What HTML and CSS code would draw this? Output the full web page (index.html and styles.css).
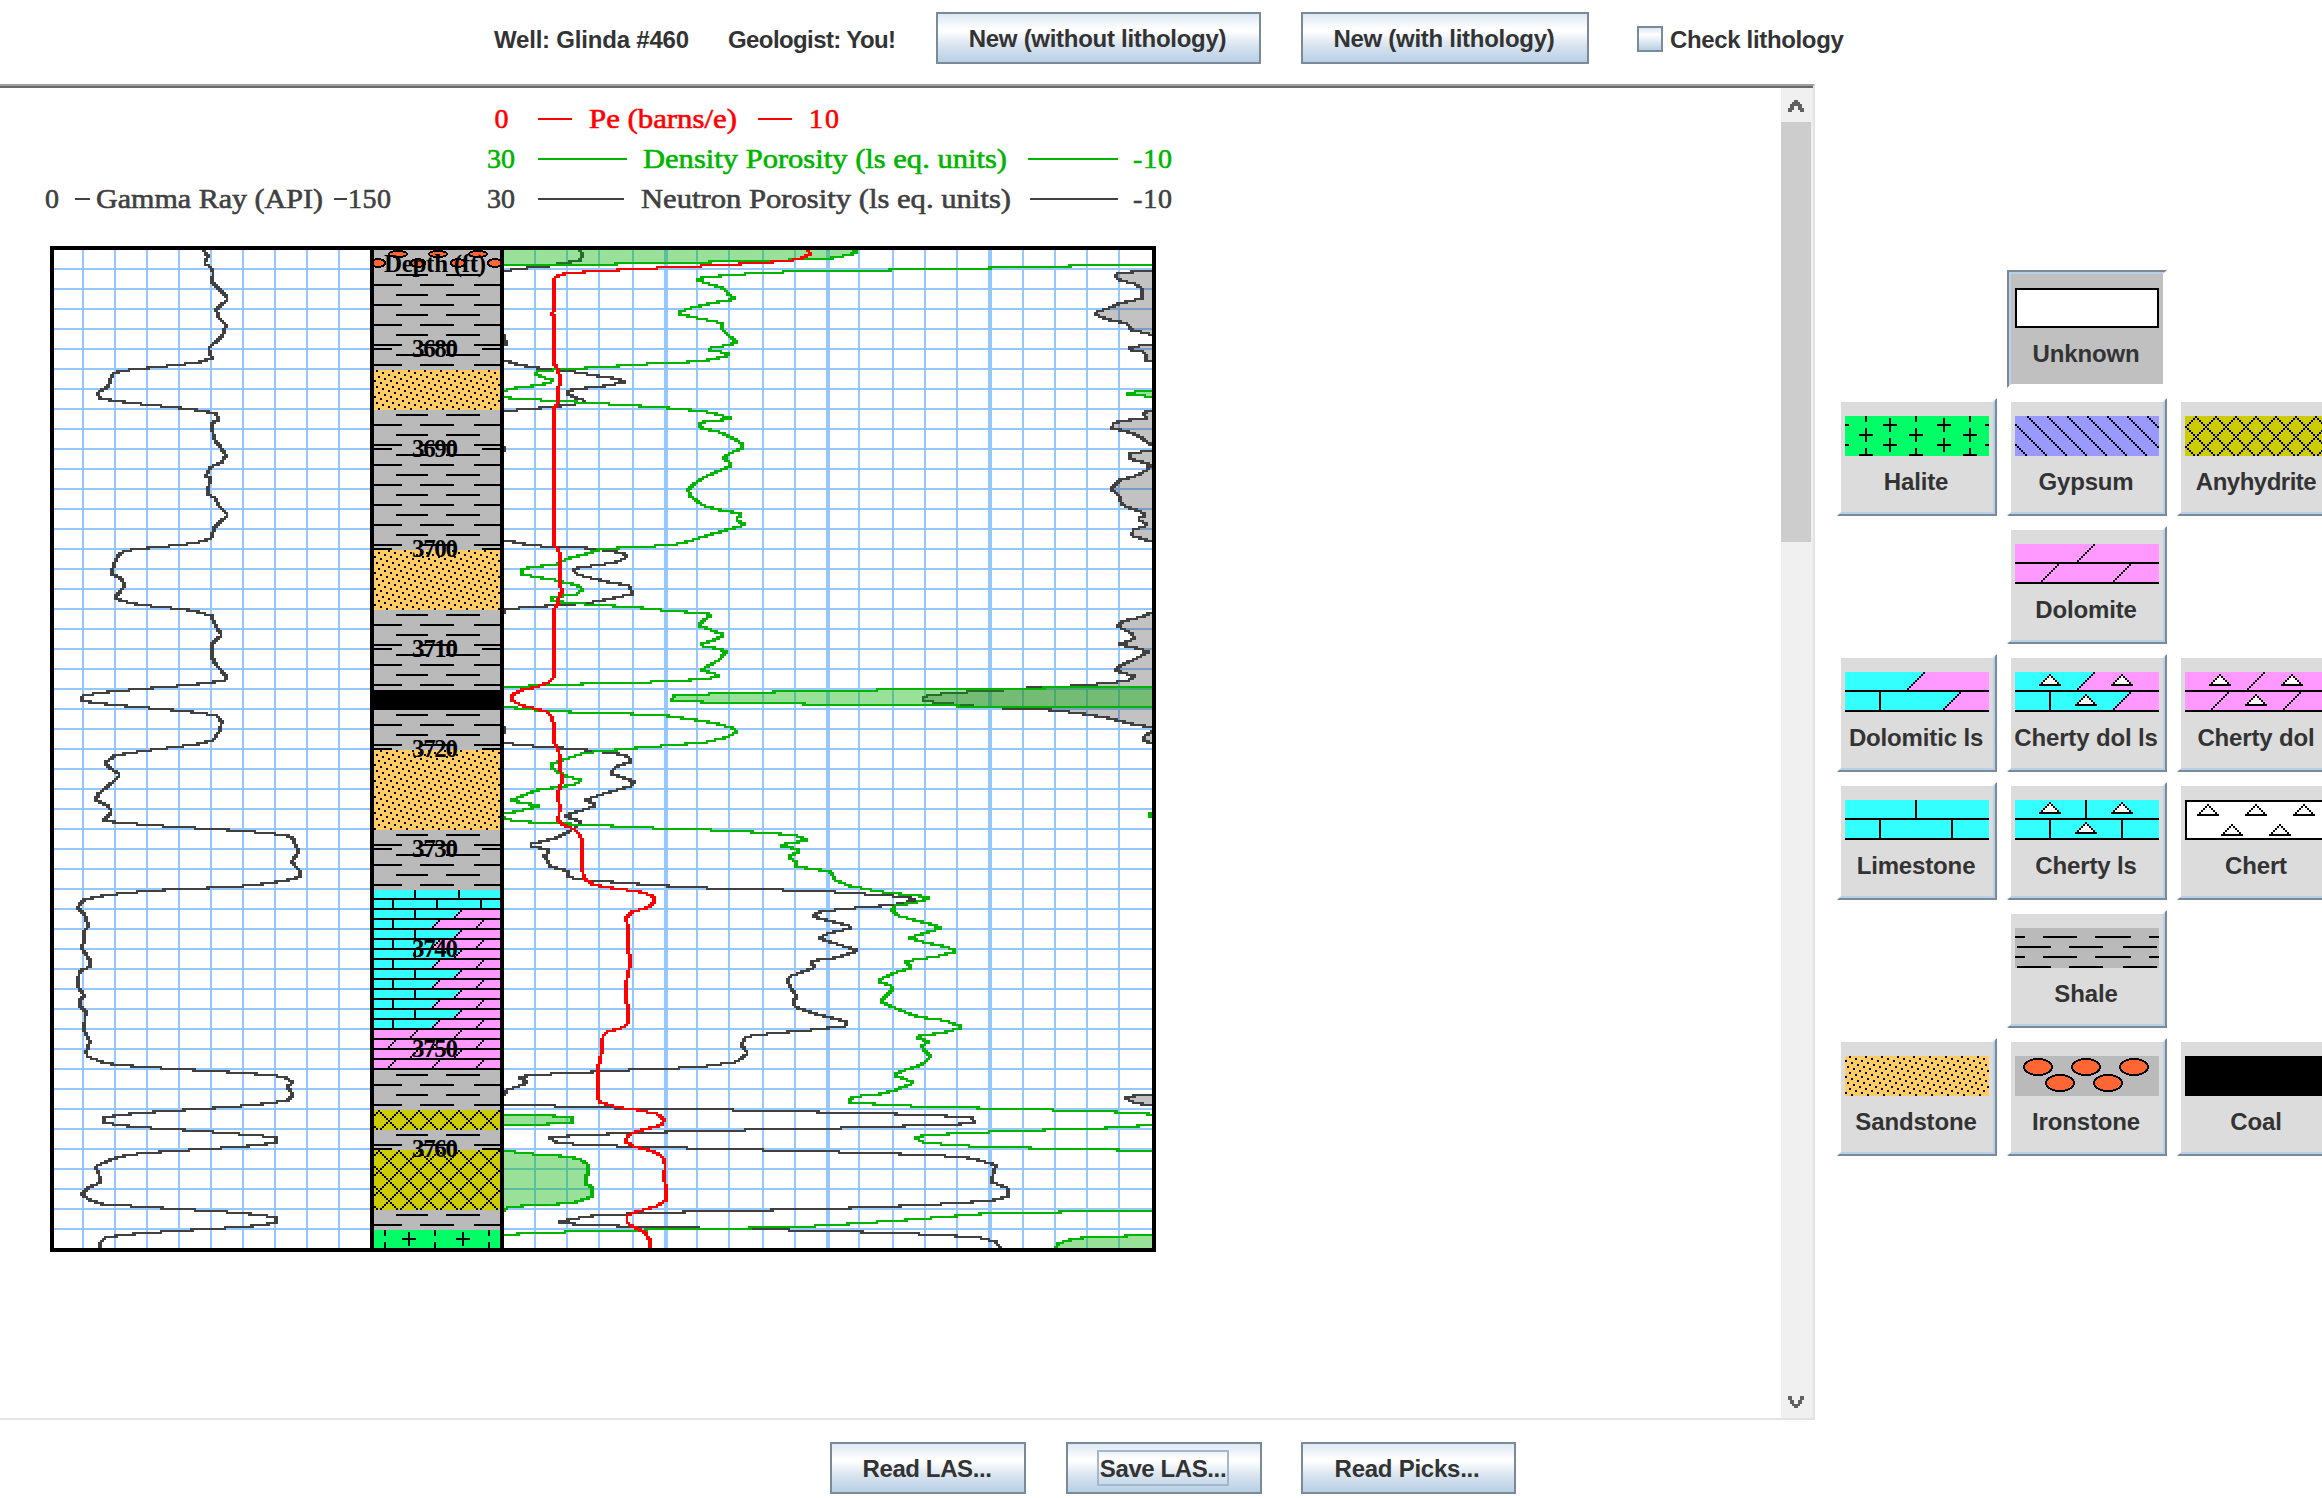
FILE: index.html
```html
<!DOCTYPE html>
<html lang="en">
<head>
<meta charset="utf-8">
<title>Well log: Glinda #460</title>
<link rel="stylesheet" href="styles.css">
</head>
<body>
<div class="app">
  <header class="toolbar">
    <span class="label well">Well: Glinda #460</span>
    <span class="label geologist">Geologist: You!</span>
    <button class="btn new-plain">New (without lithology)</button>
    <button class="btn new-lith">New (with lithology)</button>
    <label class="check"><span class="box"></span><span class="label">Check lithology</span></label>
  </header>

  <main class="workspace">
    <section class="pane">
      <svg class="log" width="1781" height="1330" viewBox="0 88 1781 1330">
        <g class="scale pe">
          <text x="494.5" y="128">0</text>
          <path d="M538 118h34v2h-34zM758 118h34v2h-34z"/>
          <text x="589" y="128" textLength="148" lengthAdjust="spacingAndGlyphs">Pe (barns/e)</text>
          <text x="809" y="128" textLength="30">10</text>
        </g>
        <g class="scale density">
          <text x="487" y="168">30</text>
          <path d="M538 158h89v2h-89zM1028 158h90v2h-90z"/>
          <text x="643" y="168" textLength="364" lengthAdjust="spacingAndGlyphs">Density Porosity (ls eq. units)</text>
          <text x="1133" y="168" textLength="39">-10</text>
        </g>
        <g class="scale neutron">
          <text x="487" y="208">30</text>
          <path d="M538 198h86v2h-86zM1030 198h88v2h-88z"/>
          <text x="641" y="208" textLength="370" lengthAdjust="spacingAndGlyphs">Neutron Porosity (ls eq. units)</text>
          <text x="1133" y="208" textLength="39">-10</text>
        </g>
        <g class="scale neutron">
          <text x="45" y="208">0</text>
          <path d="M75 198h15v2h-15zM334 198h13v2h-13z"/>
          <text x="96" y="208" textLength="227" lengthAdjust="spacingAndGlyphs">Gamma Ray (API)</text>
          <text x="348" y="208" textLength="43">150</text>
        </g>
        <g id="plot" class="plot" transform="scale(2)"></g>
        <g id="depths" class="depths">
          <text x="435" y="272" textLength="102">Depth (ft)</text>
        </g>
      </svg>
      <div class="scrollbar">
        <svg class="arrow" width="16" height="12" viewBox="0 0 8 6"><path d="M3 0h2v1h1v1h1v2h1v2h-2v-1h-1v-2h-2v2h-1v1h-2v-2h1v-2h1v-1h1z"/></svg>
        <div class="thumb"></div>
        <svg class="arrow down" width="16" height="12" viewBox="0 0 8 6"><path d="M0 0h2v2h1v2h2v-2h1v-2h2v2h-1v2h-1v1h-1v1h-2v-1h-1v-1h-1v-2h-1z"/></svg>
      </div>
    </section>

    <aside class="palette">
      <div class="rock c2 selected"><div class="face"><svg class="swatch" data-rock="unknown" viewBox="0 0 72 20"></svg><span>Unknown</span></div></div>
      <div class="rock c1"><div class="face"><svg class="swatch" data-rock="halite" viewBox="0 0 72 20"></svg><span>Halite</span></div></div>
      <div class="rock"><div class="face"><svg class="swatch" data-rock="gypsum" viewBox="0 0 72 20"></svg><span>Gypsum</span></div></div>
      <div class="rock"><div class="face"><svg class="swatch" data-rock="anhydrite" viewBox="0 0 72 20"></svg><span class="tight">Anyhydrite</span></div></div>
      <div class="rock c2"><div class="face"><svg class="swatch" data-rock="dolomite" viewBox="0 0 72 20"></svg><span>Dolomite</span></div></div>
      <div class="rock c1"><div class="face"><svg class="swatch" data-rock="dolomiticLs" viewBox="0 0 72 20"></svg><span>Dolomitic ls</span></div></div>
      <div class="rock"><div class="face"><svg class="swatch" data-rock="chertyDolLs" viewBox="0 0 72 20"></svg><span>Cherty dol ls</span></div></div>
      <div class="rock"><div class="face"><svg class="swatch" data-rock="chertyDol" viewBox="0 0 72 20"></svg><span>Cherty dol</span></div></div>
      <div class="rock c1"><div class="face"><svg class="swatch" data-rock="limestone" viewBox="0 0 72 20"></svg><span>Limestone</span></div></div>
      <div class="rock"><div class="face"><svg class="swatch" data-rock="chertyLs" viewBox="0 0 72 20"></svg><span>Cherty ls</span></div></div>
      <div class="rock"><div class="face"><svg class="swatch" data-rock="chert" viewBox="0 0 72 20"></svg><span>Chert</span></div></div>
      <div class="rock c2"><div class="face"><svg class="swatch" data-rock="shale" viewBox="0 0 72 20"></svg><span>Shale</span></div></div>
      <div class="rock c1"><div class="face"><svg class="swatch" data-rock="sandstone" viewBox="0 0 72 20"></svg><span>Sandstone</span></div></div>
      <div class="rock"><div class="face"><svg class="swatch" data-rock="ironstone" viewBox="0 0 72 20"></svg><span>Ironstone</span></div></div>
      <div class="rock"><div class="face"><svg class="swatch" data-rock="coal" viewBox="0 0 72 20"></svg><span>Coal</span></div></div>
    </aside>
  </main>

  <footer class="actions">
    <button class="btn read-las">Read LAS...</button>
    <button class="btn save-las"><span class="focus">Save LAS...</span></button>
    <button class="btn read-picks">Read Picks...</button>
  </footer>
</div>
<script src="log.js"></script>
</body>
</html>
```
FILE: styles.css
```css
* { box-sizing: border-box; }
body {
  margin: 0;
  background: #fff;
  color: #333;
  font-family: "Liberation Sans", Arial, sans-serif;
  font-weight: bold;
  font-size: 24px;
  overflow: hidden;
}
.app {
  width: 2322px;
  height: 1498px;
  display: flex;
  flex-direction: column;
  overflow: hidden;
}

/* toolbar */
.toolbar {
  height: 84px;
  flex: none;
  display: flex;
  align-items: flex-start;
  padding: 12px 0 0 494px;
}
.label { line-height: 55px; white-space: nowrap; letter-spacing: -0.2px; }
.well { width: 234px; }
.geologist { width: 208px; letter-spacing: -0.6px; }
.check .label { letter-spacing: -0.35px; }
.btn {
  height: 52px;
  padding: 0 2px 0 0;
  border: 2px solid #7a8a99;
  border-radius: 0;
  background: linear-gradient(#dde8f3 0%, #fff 32%, #fff 36%, #dae5f0 64%, #b8cfe5 100%);
  color: #333;
  font: bold 24px/50px "Liberation Sans", Arial, sans-serif;
  letter-spacing: -0.28px;
  text-align: center;
  white-space: nowrap;
}
.new-plain { width: 325px; margin-right: 40px; }
.new-lith { width: 288px; margin-right: 48px; }
.check { display: flex; align-items: flex-start; gap: 7px; }
.box {
  width: 26px;
  height: 26px;
  margin-top: 14px;
  border: 2px solid #7a8a99;
  background: linear-gradient(#dde8f3 0%, #fff 30%, #b8cfe5 100%);
}

/* scrolling log pane */
.workspace { display: flex; flex: none; height: 1336px; }
.pane {
  width: 1815px;
  height: 1336px;
  flex: none;
  display: flex;
  border-top: 2px solid #a0a0a0;
  border-right: 2px solid #e3e3e3;
  border-bottom: 2px solid #e3e3e3;
  box-shadow: inset 0 2px 0 #696969;
  padding-top: 2px;
}
.log { display: block; flex: none; }
.scrollbar {
  width: 32px;
  background: #f0f0f0;
  display: flex;
  flex-direction: column;
  padding: 12px 0 10px;
}
.arrow { display: block; margin-left: 7px; fill: #606060; shape-rendering: crispEdges; flex: none; }
.arrow.down { margin-top: auto; }
.thumb { width: 30px; height: 420px; margin-top: 10px; background: #cdcdcd; flex: none; }

.scale { font: 28px "Liberation Serif", "Times New Roman", serif; }
.scale text { stroke-width: 0.6px; }
.scale path { shape-rendering: crispEdges; }
.pe { fill: #f00; }
.pe text { stroke: #f00; }
.density { fill: #00b400; }
.density text { stroke: #00b400; }
.neutron { fill: #404040; }
.neutron text { stroke: #404040; }
.plot, .swatch { shape-rendering: crispEdges; }
.depths { font: bold 25px "Liberation Serif", "Times New Roman", serif; text-anchor: middle; fill: #000; }

/* lithology palette */
.palette {
  flex: none;
  display: grid;
  grid-template-columns: repeat(3, 160px);
  grid-auto-rows: 118px;
  gap: 10px;
  padding: 186px 0 0 22px;
}
.rock { border: 2px solid; border-color: #fff #7a8a99 #7a8a99 #fff; }
.face {
  height: 114px;
  border: 2px solid;
  border-color: #fff #b8cfe5 #b8cfe5 #fff;
  background: #dcdcdc;
  background-clip: padding-box;
  display: flex;
  flex-direction: column;
  align-items: center;
  padding-top: 14px;
}
.face span { line-height: 28px; margin-top: 12px; padding-right: 2px; white-space: nowrap; letter-spacing: -0.15px; }
.face .tight { letter-spacing: -0.5px; }
.swatch { width: 144px; height: 40px; flex: none; display: block; }
.c1 { grid-column: 1; }
.c2 { grid-column: 2; }
.selected { border-color: #7a8a99 #fff #fff #7a8a99; }
.selected .face { border-color: #b8cfe5 #fff #fff #b8cfe5; background-color: #c0c0c0; }

/* file actions */
.actions { display: flex; padding: 22px 0 0 830px; gap: 40px; }
.read-las, .save-las { width: 196px; }
.read-picks { width: 215px; margin-left: -1px; }
.actions .btn { letter-spacing: -0.4px; }
.actions .read-picks { letter-spacing: -0.25px; padding-right: 3px; }
.focus { display: block; width: 132px; height: 36px; margin: 0 auto; border: 2px solid #a3b8cc; line-height: 34px; }
```
FILE: log.js
```js
(function () {
  const NS = "http://www.w3.org/2000/svg";
  const BLACK = "#000", CYAN = "#33ffff", PINK = "#ff99ff", GREY = "#bababa";

  function path(parent, d, fill, opacity) {
    if (!d) return;
    const p = document.createElementNS(NS, "path");
    p.setAttribute("d", d);
    p.setAttribute("fill", fill);
    if (opacity) p.setAttribute("fill-opacity", opacity);
    parent.appendChild(p);
  }
  const box = (x, y, w, h) => `M${x} ${y}h${w}v${h}h${-w}z`;
  const mod = (a, n) => ((a % n) + n) % n;

  // Per-cell painter: every lit cell of the x0..x1, y0..y1 window becomes a unit square.
  function cells(x0, y0, x1, y1, test) {
    let d = "";
    for (let y = y0; y < y1; y++) {
      let run = -1;
      for (let x = x0; x <= x1; x++) {
        const on = x < x1 && test(x, y);
        if (on && run < 0) run = x;
        if (!on && run >= 0) { d += box(run, y, x - run, 1); run = -1; }
      }
    }
    return d;
  }
  const plus = (cx, cy) => (x, y) =>
    (x === cx && Math.abs(y - cy) <= 3) || (y === cy && Math.abs(x - cx) <= 3);
  const sand = (x, y) => mod(x - 3 * y, 8) === 1;

  function triangle(g, cx, top) {
    path(g, cells(cx - 5, top, cx + 6, top + 6, (x, y) => Math.abs(x - cx) < y - top), "#fff");
    path(g, cells(cx - 5, top, cx + 6, top + 6,
      (x, y) => Math.abs(x - cx) === y - top || y === top + 5), BLACK);
  }
  function ellipse(g, cx, cy, rx, ry) {
    const e = document.createElementNS(NS, "ellipse");
    for (const [k, v] of Object.entries({ cx, cy, rx, ry, fill: "#ff6633", stroke: BLACK }))
      e.setAttribute(k, v);
    g.appendChild(e);
  }

  /* ---------- palette swatches ---------- */
  const fill = (g, c) => path(g, box(0, 0, 72, 20), c);
  const beds = g => path(g, box(0, 9, 72, 1) + box(0, 19, 72, 1), BLACK);
  const frame = g => path(g, box(0, 0, 72, 1) + box(0, 19, 72, 1) + box(0, 0, 1, 20) + box(71, 0, 1, 20), BLACK);
  const slash = (x0, y0) => cells(0, y0, 72, y0 + 9, (x, y) => x === x0 - (y - y0));
  const cherts = g => { triangle(g, 17, 1); triangle(g, 53, 1); triangle(g, 35, 11); };

  const rocks = {
    unknown(g) { fill(g, "#fff"); frame(g); },
    halite(g) {
      fill(g, "#00ff66");
      const marks = [];
      for (const cx of [10, 35, 62]) for (const cy of [-1, 9, 19]) marks.push(plus(cx, cy));
      for (const cx of [-2, 22, 49, 73]) for (const cy of [4, 14]) marks.push(plus(cx, cy));
      path(g, cells(0, 0, 72, 20, (x, y) => marks.some(m => m(x, y))), BLACK);
    },
    gypsum(g) {
      fill(g, "#9999ff");
      path(g, cells(0, 0, 72, 20, (x, y) => mod(x - y, 10) === 6), BLACK);
    },
    anhydrite(g) {
      fill(g, "#cccc00");
      path(g, cells(0, 0, 72, 20, (x, y) => mod(x - y, 10) === 5 || mod(x + y, 10) === 5), BLACK);
    },
    dolomite(g) {
      fill(g, PINK); beds(g);
      path(g, slash(39, 0) + slash(21, 10) + slash(57, 10), BLACK);
    },
    dolomiticLs(g) {
      fill(g, PINK);
      path(g, "M0 0h40l-9 9h-31zM0 10h58l-9 9h-49z", CYAN);
      beds(g);
      path(g, slash(39, 0) + box(17, 10, 1, 9) + slash(57, 10), BLACK);
    },
    chertyDolLs(g) { rocks.dolomiticLs(g); cherts(g); },
    chertyDol(g) { rocks.dolomite(g); cherts(g); },
    limestone(g) {
      fill(g, CYAN); beds(g);
      path(g, box(35, 0, 1, 9) + box(17, 10, 1, 9) + box(53, 10, 1, 9), BLACK);
    },
    chertyLs(g) { rocks.limestone(g); cherts(g); },
    chert(g) {
      fill(g, "#fff"); frame(g);
      [11, 35, 59].forEach(x => triangle(g, x, 2));
      [23, 47].forEach(x => triangle(g, x, 12));
    },
    shale(g) {
      fill(g, GREY);
      let d = "";
      for (const y of [4, 14]) d += box(0, y, 5, 1) + box(14, y, 17, 1) + box(40, y, 18, 1) + box(67, y, 5, 1);
      for (const y of [9, 19]) d += box(1, y, 17, 1) + box(27, y, 17, 1) + box(54, y, 17, 1);
      path(g, d, BLACK);
    },
    sandstone(g) { fill(g, "#ffcc66"); path(g, cells(0, 0, 72, 20, (x, y) => sand(x + 7, y)), BLACK); },
    ironstone(g) {
      fill(g, GREY);
      [11.5, 35.5, 59.5].forEach(x => ellipse(g, x, 5.5, 7, 4));
      [22.5, 46.5].forEach(x => ellipse(g, x, 13.5, 7, 4));
    },
    coal(g) { fill(g, BLACK); }
  };
  document.querySelectorAll(".swatch").forEach(s => rocks[s.dataset.rock](s));

  /* ---------- log tracks ---------- */
  const plot = document.getElementById("plot");
  const TOP = 125, BOTTOM = 624;

  let grid = "";
  for (let y = 134; y < BOTTOM; y += 10) grid += box(27, y, 549, 1);
  for (let x = 41; x < 180; x += 16) grid += box(x, TOP, 1, BOTTOM - TOP);
  for (const x of [267, 283, 299, 316, 348, 364, 381, 397, 429, 446, 462, 478, 511, 527, 543, 559])
    grid += box(x, TOP, 1, BOTTOM - TOP);
  for (const x of [332, 413, 494]) grid += box(x, TOP, 2, BOTTOM - TOP);
  path(plot, grid, "#96c8ff");

  // Digitised sheets: origin and units per plot cell.
  const SHEET = {
    gr1: [15, 115, 6, 6], gr2: [15, 370, 6, 6],
    a: [245, 117.5, 6, 6], b: [245, 285, 4.612, 6], c: [245, 440, 4.612, 6]
  };
  function read(...parts) {
    const pts = [];
    for (const [sheet, text] of parts) {
      const [ox, oy, kx, ky] = SHEET[sheet];
      for (const pair of text.trim().split(/\s+/)) {
        const [x, y] = pair.split(",").map(Number);
        pts.push([ox + x / kx, oy + y / ky]);
      }
    }
    for (let i = 1; i < pts.length; i++)
      if (pts[i][1] <= pts[i - 1][1]) pts[i][1] = pts[i - 1][1] + 0.01;
    return pts;
  }
  function at(pts, y) {
    if (y <= pts[0][1]) return pts[0][0];
    for (let i = 1; i < pts.length; i++)
      if (y <= pts[i][1]) {
        const [xa, ya] = pts[i - 1], [xb, yb] = pts[i];
        return xa + (xb - xa) * (y - ya) / (yb - ya);
      }
    return pts[pts.length - 1][0];
  }
  function curve(pts, lo, hi, color, shade) {
    let d = "", area = "";
    const y0 = Math.max(TOP, Math.floor(pts[0][1])), y1 = Math.min(BOTTOM, Math.ceil(pts[pts.length - 1][1]));
    for (let y = y0; y < y1; y++) {
      const a = at(pts, y), b = at(pts, y + 1);
      const l = Math.max(lo, Math.round(Math.min(a, b) - 0.8));
      const r = Math.min(hi, Math.round(Math.max(a, b) + 0.8));
      if (r > l) d += box(l, y, r - l, 1);
      if (shade === "left" && l > lo) area += box(lo, y, l - lo, 1);
      if (shade === "right" && r < hi) area += box(r, y, hi - r, 1);
    }
    if (shade) path(plot, area, color, color === "#404040" ? 0.32 : 0.4);
    path(plot, d, color);
  }

  const INK = "#404040", GREEN = "#00b400", RED = "#ff0000";

  curve(read(
    ["gr1", `522,60 534,80 522,100 540,110 550,130 545,155 570,178 594,207 558,240 566,262 588,285 575,320 535,355 546,385
     505,397 440,405 380,411 325,417 270,423 248,432 233,470 204,488 210,505 258,513 305,519 360,525 425,531 475,537
     520,543 555,550 570,567 546,578 546,600 555,630 570,650 588,677 575,697 540,712 528,737 542,745 534,775 535,795
     558,805 565,825 594,855 555,890 543,925 505,937 450,945 385,951 320,957 285,963 265,975 250,1010 245,1032 275,1047
     283,1070 260,1095 258,1107 295,1117 330,1125 395,1131 450,1137 495,1143 545,1158 558,1190 576,1215 546,1240
     546,1280 555,1300 588,1338 585,1352 530,1359 475,1365 405,1371 330,1377 265,1383 205,1389 160,1397 155,1412
     200,1419 255,1425 320,1431 395,1437 460,1443 510,1449 560,1456 575,1475 570,1500 550,1530 500,1543 435,1551`],
    ["gr2", `385,27 340,33 300,39 255,47 222,70 270,105 250,125 205,162 197,180 230,195 246,213 228,235 220,243 285,249
     355,255 445,261 545,267 640,273 710,279 770,286 790,297 805,335 785,365 810,395 808,412 760,423 705,431 620,440
     490,446 360,452 290,459 225,466 165,478 150,490 143,505 165,525 175,558 162,575 162,600 155,625 180,660 180,680
     150,692 143,720 146,742 162,768 150,780 150,800 167,815 162,870 180,907 168,935 172,950 225,969 270,975 345,981
     440,987 545,993 640,999 715,1005 765,1011 788,1028 772,1040 790,1065 770,1082 690,1093 610,1100 525,1106 430,1112
     345,1118 280,1124 222,1132 222,1148 270,1155 330,1162 415,1167 510,1173 600,1180 680,1186 738,1192 740,1208
     685,1215 620,1221 540,1226 445,1232 360,1238 300,1244 250,1256 205,1275 197,1282 207,1300 210,1328 180,1340
     155,1362 180,1380 215,1392 270,1396 335,1400 425,1406 530,1412 620,1418 690,1425 738,1432 740,1448 690,1456
     620,1462 530,1467 440,1473 345,1479 280,1485 225,1493 210,1510 210,1524`]
  ), 27, 185, INK);

  const L = 252, R = 576;

  // neutron porosity, with off-scale passages wrapped to the opposite edge
  [
    [null, ["a", "270,45 278,60 270,76 210,86 165,95 120,98 70,104 42,108"]],
    ["right", ["a", `1986,105 1935,110 1880,116 1878,128 1895,137 1940,148 1956,162 1956,190 1890,205 1860,218 1810,235
      1850,253 1910,265 1925,285 1975,296 1986,301`]],
    [null, ["a", "42,297 45,300 45,318 54,324 42,330"]],
    ["right", ["a", "1986,327 1935,335 1910,342 1965,352 1968,368 1958,372 1986,380"]],
    [null, ["a", `42,375 80,388 150,400 210,406 265,412 330,424 385,432 402,442 330,455 255,462 228,473 260,490 295,499
      240,510 150,519 80,525 42,531`]],
    ["right", ["a", "1986,526 1960,534 1968,550 1900,557 1870,565 1866,580 1920,592 1950,605 1986,632"]],
    [null, ["a", "42,633 46,640 42,650"]],
    ["right", ["a", `1986,645 1920,657 1918,672 1960,682 1982,690 1970,705 1940,722 1890,735 1863,762 1885,780 1898,810
      1950,830 1970,840 1940,852 1975,869 1945,880 1930,885 1925,902 1960,912 1986,920`]],
    [null,
      ["a", `42,915 95,926 160,934 280,938 350,946 400,955 415,965 375,983 310,992 245,1002 265,1020 330,1035`],
      ["b", `190,3 205,15 260,33 320,47 330,72 270,88 220,100 160,105 75,113 35,118 32,130`]],
    ["right", ["b", `1526,128 1500,142 1460,153 1447,168 1480,190 1485,207 1450,224 1490,234 1520,245 1490,265 1450,290
      1443,303 1487,318 1470,333 1400,342 1340,348 1260,352 1180,360 1110,365 1030,373 1000,380 998,393 1060,401
      1130,410 1200,415 1290,420 1350,428 1430,445 1480,462 1526,472`]],
    [null, ["b", "32,468 35,475 32,490"]],
    ["right", ["b", "1526,485 1510,497 1507,512 1526,520"]],
    [null,
      ["b", `32,516 60,524 120,530 200,537 290,550 318,560 325,575 290,590 277,610 310,625 333,635 325,648 270,668
      220,690 245,705 220,718 170,737 210,755 195,775 150,805 85,825 140,842 125,858 140,890 180,903 180,922 230,931
      320,940 380,946 500,954 675,960 795,966 865,972 930,978 980,986`],
      ["c", `980,62 930,75 850,83 795,90 755,97 745,110 800,128 840,142 780,160 757,175 800,192 848,212 800,233 738,243
      750,262 690,290 685,305 708,350 698,362 705,382 760,405 822,425 818,438 740,450 650,460 590,470 580,497 595,520
      570,545 500,558 425,565 320,570 220,577 140,582 65,590 88,608 40,630 32,645`]],
    ["right", ["c", "1526,642 1495,647 1460,651 1485,668 1526,677"]],
    [null, ["c", `32,672 150,678 250,683 365,686 560,690 755,696 915,701 1040,707 1110,713 1120,730 1065,733 955,738
      810,744 620,749 430,755 290,761 190,767 137,772 155,790 210,793 310,799 455,804 630,810 805,816 945,822 1050,828
      1110,835 1167,855 1155,905 1195,925 1195,950 1155,962 1070,970 965,977 830,984 650,990 470,995 340,1001 250,1005
      185,1018 155,1028 215,1034 335,1040 480,1044 660,1049 835,1055 975,1061 1075,1068 1130,1073 1165,1085 1180,1106`]]
  ].forEach(([shade, ...parts]) => curve(read(...parts), L, R, INK, shade));

  // density porosity
  [
    ["left", ["a", "1090,45 1100,54 1065,62 1020,70 930,74 800,78 700,80 500,85 315,88 40,93"]],
    [null, ["a", `1986,88 1820,91 1500,99 1200,105 1050,107 895,110 800,116 730,118 680,124 640,128 620,133 650,145
      700,160 718,180 740,192 690,200 650,208 600,220 570,230 563,235 600,245 640,253 700,265 695,280 715,300 740,324
      700,333 650,341 665,348 722,354 705,365 650,376 595,381 510,385 450,388 385,393 270,400 190,405 150,408 132,414
      160,428 188,434 180,444 120,454 60,461 40,470`]],
    ["right", ["a", "1986,467 1945,470 1890,475 1942,480 1986,486"]],
    [null,
      ["a", `40,485 65,490 135,494 240,500 340,506 435,512 525,518 600,525 650,531 690,540 725,551 680,557 625,563
      632,578 690,592 720,605 755,625 757,640 720,655 700,668 728,690 690,706 640,728 610,748 594,765 600,782 640,812
      690,825 740,833 757,840 737,852 765,870 720,882 650,902 600,918 560,927 495,933 385,939 325,945 290,956 230,972
      200,988 120,997 95,1005 97,1018 150,1028 190,1034 240,1046`],
      ["b", `200,45 213,58 200,72 155,80 132,87 175,98 262,106 335,112 395,120 440,125 500,130 508,137 478,165 520,185
      543,195 510,213 480,225 520,235 545,243 530,268 488,300 532,317 500,327 400,335 232,341 150,345 90,348 32,354`]],
    ["right", ["b", `1526,348 1350,353 985,358 710,364 520,371 425,377 418,390 500,397 665,401 900,405 1140,409 1526,414`]],
    [null, ["b", `32,408 75,417 160,425 310,431 400,436 460,447 520,460 560,475 570,485 545,502 500,516 430,525 360,531
      300,539 220,548 180,565 140,583 145,597 175,618 213,632 190,645 110,660 70,680 48,691 80,700 118,706 90,716
      55,726 32,732`]],
    ["right", ["b", "1526,726 1519,735 1526,744"]],
    [null,
      ["b", `32,743 50,751 100,757 200,763 330,771 390,775 510,780 605,786 670,792 715,799 730,812 690,820 665,826
      700,835 717,843 688,860 705,875 707,890 750,898 785,905 795,930 830,948 900,965 960,974 1015,981`],
      ["c", `1000,60 990,65 935,77 927,90 940,107 1000,127 1043,143 1000,160 967,173 1000,187 1050,200 1077,213 1030,230
      958,243 972,262 930,280 892,303 932,321 920,340 900,363 930,382 985,410 1050,422 1090,441 1050,457 980,470
      1010,485 995,500 1015,530 995,555 950,573 930,585 978,608 935,630 905,641 835,651 828,667 885,672 1000,680
      1125,684 1275,689 1420,695 1510,699 1526,706`]],
    ["left", ["c", "32,702 108,706 188,710 188,730 108,733 32,738"]],
    [null, ["c", `1526,735 1445,743 1300,749 1170,755 1075,760 975,770 1000,787 1040,792 1115,799 1245,804 1435,809
      1526,816`]],
    ["left", ["c", `32,810 75,820 150,826 205,836 227,855 227,875 222,890 222,912 235,920 235,950 195,967 150,973 75,978
      40,984 32,994`]],
    [null, ["c", `1526,990 1350,995 1140,1001 980,1018 850,1030 750,1038 600,1044 395,1049 190,1055 65,1062 32,1068`]],
    ["right", ["c", "1526,1065 1445,1069 1350,1075 1310,1090 1305,1106"]]
  ].forEach(([shade, ...parts]) => curve(read(...parts), L, R, GREEN, shade));

  // photoelectric factor
  curve(read(
    ["a", `955,45 960,57 935,70 905,76 860,80 770,86 655,92 520,98 400,104 300,110 230,114 205,122 192,132 192,222
     186,235 192,245 192,385 204,405 210,430 210,445 204,460 204,500 192,520 192,930 204,942 210,955 210,1040`],
    ["b", `162,50 167,60 160,80 155,105 148,118 148,320 135,337 110,350 75,360 52,375 50,390 70,405 105,416 130,425
     142,440 148,470 148,515 157,540 162,560 162,600 167,630 157,665 157,690 162,710 157,750 165,762 195,778 210,800
     213,830 213,900 217,925 240,945 285,955 340,964 370,975 380,988`],
    ["c", `382,62 365,82 325,97 313,115 318,140 318,210 323,235 323,255 315,300 313,365 318,380 318,430 308,442
     270,456 260,470 257,520 250,560 248,590 248,655 255,668 295,682 340,690 385,702 402,720 395,735 345,752 318,765
     313,785 330,798 385,818 400,835 404,860 401,890 405,920 405,960 385,978 335,997 315,1008 315,1028 330,1040
     358,1058 368,1080 370,1106`]
  ), L, R, RED);

  /* ---------- lithology column ---------- */
  const CL = 187, CR = 250;
  const band = (y0, y1, c) => path(plot, box(CL, y0, CR - CL, y1 - y0), c);
  const tick = (X, y) => cells(CL, y, CR, y + 4, (x, yy) => x === X - (yy - y));

  const column = {
    shale(y0, y1) {
      band(y0, y1, GREY);
      let d = "";
      for (let y = y0; y < y1; y++) {
        if (y % 10 === 7) d += box(198, y, 16, 1) + box(223, y, 17, 1);
        if (y % 10 === 2) d += box(187, y, 14, 1) + box(210, y, 17, 1) + box(237, y, 13, 1);
      }
      path(plot, d, BLACK);
    },
    ironstone(y0, y1) {
      band(y0, y1, GREY);
      [199, 219, 239].forEach(x => ellipse(plot, x, 127, 4.5, 1.5));
      [189, 209, 229, 247.5].forEach(x => ellipse(plot, x, 131.5, 3.5, 2));
    },
    sandstone(y0, y1) { band(y0, y1, "#ffcc66"); path(plot, cells(CL, y0, CR, y1, sand), BLACK); },
    coal(y0, y1) { band(y0, y1, BLACK); },
    anhydrite(y0, y1) {
      band(y0, y1, "#cccc00");
      path(plot, cells(CL, y0, CR, y1, (x, y) => mod(x - y, 10) === 4 || mod(x + y, 10) === 4), BLACK);
    },
    halite(y0, y1) {
      band(y0, y1, "#00ff66");
      const marks = [plus(204, 619), plus(231, 619)];
      for (const cx of [192, 217, 244]) marks.push(plus(cx, 614), plus(cx, 624));
      path(plot, cells(CL, y0, CR, y1, (x, y) => marks.some(m => m(x, y))), BLACK);
    },
    limestone(y0, y1) {
      band(y0, y1, CYAN);
      let d = "";
      for (let y = y0; y < y1; y += 5) {
        d += box(CL, y + 4, CR - CL, 1);
        for (const x of (y - 445) % 10 ? [196, 218, 240] : [207, 229]) d += box(x, y, 1, 4);
      }
      path(plot, d, BLACK);
    },
    dolomiticLs(y0, y1) {
      band(y0, y1, PINK);
      let d = "", blue = "";
      for (let y = y0; y < y1; y += 5) {
        const low = (y - 445) % 10 !== 0, X = low ? 219 : 230;
        blue += `M${CL} ${y}H${X}l-4 4H${CL}z`;
        d += box(CL, y + 4, CR - CL, 1) + box(low ? 196 : 207, y, 1, 4) + tick(X, y);
        if (low) d += tick(241, y);
      }
      path(plot, blue, CYAN);
      path(plot, d, BLACK);
    },
    dolomite(y0, y1) {
      band(y0, y1, PINK);
      let d = "";
      for (let y = y0; y < y1; y += 5) {
        d += box(CL, y + 4, CR - CL, 1);
        for (const x of (y - 445) % 10 ? [197, 219, 241] : [208, 230]) d += tick(x, y);
      }
      path(plot, d, BLACK);
    }
  };
  [
    ["ironstone", 125, 135], ["shale", 135, 185], ["sandstone", 185, 205], ["shale", 205, 275],
    ["sandstone", 275, 305], ["shale", 305, 345], ["coal", 345, 355], ["shale", 355, 375],
    ["sandstone", 375, 415], ["shale", 415, 445], ["limestone", 445, 455], ["dolomiticLs", 455, 515],
    ["dolomite", 515, 535], ["shale", 535, 555], ["anhydrite", 555, 565], ["shale", 565, 575],
    ["anhydrite", 575, 605], ["shale", 605, 615], ["halite", 615, 624]
  ].forEach(([rock, y0, y1]) => column[rock](y0, y1));

  const depths = document.getElementById("depths");
  let ticks = "";
  for (let i = 0; i < 9; i++) {
    ticks += box(CL, 174 + 50 * i, 9, 1) + box(241, 174 + 50 * i, 9, 1);
    const t = document.createElementNS(NS, "text");
    t.setAttribute("x", 435);
    t.setAttribute("y", 357 + 100 * i);
    t.setAttribute("textLength", 46);
    t.textContent = 3680 + 10 * i;
    depths.appendChild(t);
  }
  path(plot, ticks, BLACK);

  // frames
  path(plot, box(25, 123, 553, 2) + box(25, 624, 553, 2) + box(25, 123, 2, 503) +
    box(185, 123, 2, 503) + box(250, 123, 2, 503) + box(576, 123, 2, 503), BLACK);
})();
```
